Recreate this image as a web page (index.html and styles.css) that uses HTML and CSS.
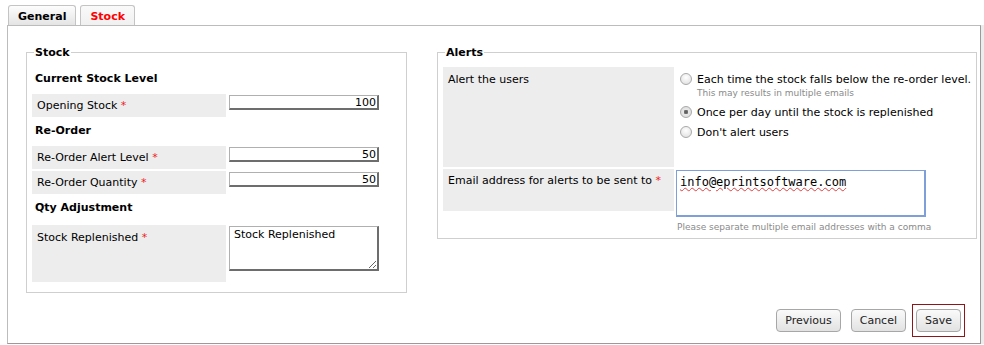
FILE: index.html
```html
<!DOCTYPE html>
<html lang="en">
<head>
    <meta charset="UTF-8">
    <title>Stock</title>
    <link rel="stylesheet" href="styles.css">
</head>
<body>

<div class="tabs">
    <div class="tab">General</div>
    <div class="tab active">Stock</div>
</div>

<div class="panel">
    <div class="columns">
        <fieldset class="stock-box">
            <legend>Stock</legend>

            <div class="section-title">Current Stock Level</div>
            <div class="row">
                <div class="label">Opening Stock <span class="req">*</span></div>
                <div class="field"><input type="text" class="num" value="100"></div>
            </div>

            <div class="section-title">Re-Order</div>
            <div class="row">
                <div class="label">Re-Order Alert Level <span class="req">*</span></div>
                <div class="field"><input type="text" class="num" value="50"></div>
            </div>
            <div class="row">
                <div class="label">Re-Order Quantity <span class="req">*</span></div>
                <div class="field"><input type="text" class="num" value="50"></div>
            </div>

            <div class="section-title">Qty Adjustment</div>
            <div class="row tall">
                <div class="label">Stock Replenished <span class="req">*</span></div>
                <div class="field"><textarea class="note">Stock Replenished</textarea></div>
            </div>
        </fieldset>

        <fieldset class="alerts-box">
            <legend>Alerts</legend>

            <div class="row alert-row">
                <div class="label">Alert the users</div>
                <div class="field options">
                    <label class="option">
                        <input type="radio" name="alert">
                        <span>Each time the stock falls below the re-order level.<br><small class="hint">This may results in multiple emails</small></span>
                    </label>
                    <label class="option">
                        <input type="radio" name="alert" checked>
                        <span>Once per day until the stock is replenished</span>
                    </label>
                    <label class="option">
                        <input type="radio" name="alert">
                        <span>Don't alert users</span>
                    </label>
                </div>
            </div>

            <div class="row email-row">
                <div class="label">Email address for alerts to be sent to <span class="req">*</span></div>
                <div class="field">
                    <div class="email"><span class="typo">info@eprintsoftware.com</span></div>
                    <div class="hint">Please separate multiple email addresses with a comma</div>
                </div>
            </div>
        </fieldset>
    </div>

    <div class="buttons">
        <button>Previous</button>
        <button>Cancel</button>
        <span class="focus-box"><button>Save</button></span>
    </div>
</div>

</body>
</html>
```

FILE: styles.css
```css
body {
    margin: 0;
    font-family: "DejaVu Sans", Verdana, sans-serif;
    font-size: 11px;
    color: #000;
    background-color: #fff;
}
.tabs {
    display: flex;
    gap: 4px;
    padding: 5px 0 0 8px;
    height: 20px;
}
.tab {
    padding: 4px 9px 0 9px;
    font-weight: bold;
    font-size: 11px;
    border: 1px solid #c4c4c4;
    border-bottom: none;
    border-radius: 3px 3px 0 0;
    background: linear-gradient(#fdfdfd, #e4e4e4);
}
.tab.active {
    color: #ff0000;
    background: linear-gradient(#fafafa, #f0f0f0);
}
.panel {
    margin-left: 7px;
    width: 972px;
    height: 317px;
    border: 1px solid #bcbcbc;
    border-right-color: #9a9a9a;
    border-bottom-color: #9a9a9a;
    box-shadow: 3px 0 0 #ececec;
}
.columns {
    display: flex;
    align-items: flex-start;
    padding: 20px 0 0 18px;
}
fieldset {
    margin: 0;
    border: 1px solid #cfcfcf;
    padding: 8px 5px 8px 5px;
}
legend {
    font-weight: bold;
    font-size: 11px;
    padding: 0 1px;
    margin-left: 2px;
}
.stock-box {
    width: 369px;
    height: 229px;
}
.alerts-box {
    margin-left: 30px;
    width: 528px;
    height: 175px;
}
.section-title {
    font-weight: bold;
    font-size: 11px;
    padding: 5px 3px 9px 3px;
}
.row {
    display: flex;
    margin-bottom: 2px;
}
.label {
    width: 189px;
    padding: 5px 0 0 5px;
    background-color: #ededed;
    height: 18px;
}
.req {
    color: #f01c1c;
}
.field {
    margin-left: 3px;
}
.num {
    width: 145px;
    height: 12px;
    margin-top: 1px;
    padding: 0 1px;
    font-family: "DejaVu Sans", Verdana, sans-serif;
    font-size: 11px;
    text-align: right;
    border: 1px solid #b0b0b0;
    border-right: 2px solid #6d6d6d;
    border-bottom: 2px solid #6d6d6d;
}
.tall {
    margin-top: 2px;
}
.tall .label {
    height: 51px;
    padding-top: 6px;
}
.note {
    width: 139px;
    height: 40px;
    margin-top: 1px;
    padding: 1px 4px;
    font-family: "DejaVu Sans", Verdana, sans-serif;
    font-size: 11px;
    border: 1px solid #b0b0b0;
    border-right: 2px solid #6d6d6d;
    border-bottom: 2px solid #6d6d6d;
    resize: both;
}
.alert-row .label,
.email-row .label {
    width: 226px;
}
.alert-row .label {
    height: 94px;
    padding-top: 6px;
}
.email-row .label {
    height: 37px;
    padding-top: 5px;
}
.options {
    margin-left: 4px;
    padding-top: 6px;
}
.option {
    display: flex;
    align-items: flex-start;
    margin-bottom: 7px;
}
.option .hint {
    display: inline-block;
    line-height: 11px;
}
.option input {
    appearance: none;
    margin: 0 5px 0 2px;
    width: 12px;
    height: 12px;
    border-radius: 50%;
    border: 1px solid #a9a9a9;
    background: radial-gradient(circle at 50% 35%, #ffffff, #dcdcdc);
    box-sizing: border-box;
}
.option input:checked {
    background: radial-gradient(circle, #555 0, #777 2px, #e8e8e8 2.5px, #d8d8d8 100%);
}
.hint {
    color: #8a8a8a;
    font-size: 9px;
}
.email {
    width: 241px;
    height: 40px;
    padding: 4px 3px 0 3px;
    margin: 1px 0 0 -1px;
    border: 1px solid #7e9fd8;
    border-right-width: 2px;
    border-bottom-width: 2px;
    font-family: "DejaVu Sans Mono", "Liberation Mono", monospace;
    font-size: 12px;
}
.typo {
    text-decoration: underline wavy #e04040;
    text-decoration-thickness: 1px;
}
.email-row .hint {
    margin: 5px 0 0 0;
}
.buttons {
    display: flex;
    justify-content: flex-end;
    align-items: center;
    gap: 10px;
    margin-top: 11px;
    padding-right: 15px;
}
button {
    font-family: "DejaVu Sans", Verdana, sans-serif;
    font-size: 11px;
    padding: 4px 8px;
    border: 1px solid #a7a7a7;
    border-radius: 4px;
    background: linear-gradient(#fafafa, #e2e2e2);
    color: #222;
}
.focus-box {
    margin-left: -4px;
    border: 1px solid #8e1616;
    padding: 4px 3px;
}
```
